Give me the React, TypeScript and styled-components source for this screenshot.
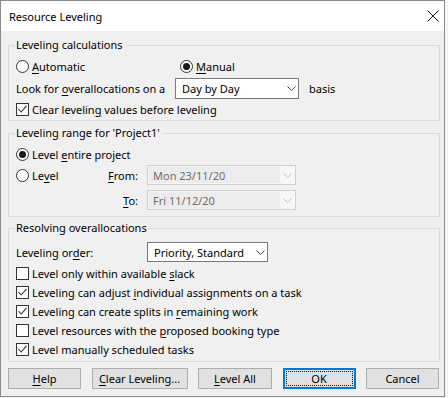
import React from 'react';
import styled, { createGlobalStyle } from 'styled-components';

const GlobalStyle = createGlobalStyle`
  html, body {
    margin: 0;
    padding: 0;
    background: #f4f4f4;
  }
  body {
    font-family: "Noto Sans", "Open Sans", sans-serif;
    font-size: 11px;
    color: #000;
  }
`;

export default function App() {
  return (
    <>
      <GlobalStyle />
      <Window>
        <TitleBar>
          <Title>Resource Leveling</Title>
          <CloseIcon />
        </TitleBar>

        <Content>
          <Group $pb={2}>
            <Legend>Leveling calculations</Legend>
            <Row $h={18} $mt={4}>
              <Cell $w={164}>
                <Radio />
                <Key>A</Key>utomatic
              </Cell>
              <Radio $checked />
              <Key>M</Key>anual
            </Row>
            <Row $h={21} $mt={3}>
              <Cell $w={159}>
                Look for <Key>o</Key>verallocations on a
              </Cell>
              <Select $w={124} $h={21}>
                <Value>Day by Day</Value>
                <Chevron />
              </Select>
              <Suffix>basis</Suffix>
            </Row>
            <Row $h={18} $mt={1}>
              <Check $checked />
              Clear levelin<Key>g</Key> values before leveling
            </Row>
          </Group>

          <Group $pb={6} $mt={4}>
            <Legend>Leveling range for 'Project1'</Legend>
            <Row $h={18} $mt={4}>
              <Radio $checked />
              Level <Key>e</Key>ntire project
            </Row>
            <Row $h={20} $mt={2}>
              <Cell $w={131}>
                <Radio />
                Le<Key>v</Key>el
                <FieldLabel>
                  <Key>F</Key>rom:
                </FieldLabel>
              </Cell>
              <Select $w={149} $h={20} $disabled>
                <Value $disabled>Mon 23/11/20</Value>
                <Chevron $disabled />
              </Select>
            </Row>
            <Row $h={20} $mt={5}>
              <Cell $w={131}>
                <FieldLabel>
                  <Key>T</Key>o:
                </FieldLabel>
              </Cell>
              <Select $w={149} $h={20} $disabled>
                <Value $disabled>Fri 11/12/20</Value>
                <Chevron $disabled />
              </Select>
            </Row>
          </Group>

          <Group $pb={2} $mt={3}>
            <Legend>Resolving overallocations</Legend>
            <Row $h={20} $mt={6}>
              <Cell $w={131}>
                Leveling or<Key>d</Key>er:
              </Cell>
              <Select $w={121} $h={20}>
                <Value>Priority, Standard</Value>
                <Chevron />
              </Select>
            </Row>
            <Row $h={19} $mt={2}>
              <Check />
              Level only within available <Key>s</Key>lack
            </Row>
            <Row $h={19}>
              <Check $checked />
              Leveling can adjust <Key>i</Key>ndividual assignments on a task
            </Row>
            <Row $h={19}>
              <Check $checked />
              Leveling can create splits in <Key>r</Key>emaining work
            </Row>
            <Row $h={19}>
              <Check />
              Level resources with the <Key>p</Key>roposed booking type
            </Row>
            <Row $h={19}>
              <Check $checked />
              Level manually scheduled tasks
            </Row>
          </Group>

          <ButtonRow>
            <Button $w={73}>
              <Key>H</Key>elp
            </Button>
            <Button $w={96}>
              <Key>C</Key>lear Leveling...
            </Button>
            <Button $w={74}>
              <Key>L</Key>evel All
            </Button>
            <Button $w={73} $default>
              OK
            </Button>
            <Button $w={73}>Cancel</Button>
          </ButtonRow>
        </Content>
      </Window>
    </>
  );
}

const Radio = ({ $checked }: { $checked?: boolean }) => (
  <RadioCircle>{$checked && <RadioDot />}</RadioCircle>
);

const Check = ({ $checked }: { $checked?: boolean }) => (
  <CheckBox>
    {$checked && (
      <svg width="11" height="11" viewBox="0 0 11 11">
        <polyline points="1.5,5 4.2,8 9.5,1.8" fill="none" stroke="#333" strokeWidth="1.1" />
      </svg>
    )}
  </CheckBox>
);

const Chevron = ({ $disabled }: { $disabled?: boolean }) => (
  <ChevronWrap>
    <svg width="9" height="5" viewBox="0 0 9 5">
      <polyline
        points="0.5,0.5 4.5,4.5 8.5,0.5"
        fill="none"
        stroke={$disabled ? '#c4c4c4' : '#444'}
        strokeWidth="1"
      />
    </svg>
  </ChevronWrap>
);

const CloseIcon = () => (
  <svg width="12" height="12" viewBox="0 0 12 12">
    <path d="M0.5 0.5 L11.5 11.5 M11.5 0.5 L0.5 11.5" stroke="#111" strokeWidth="1" />
  </svg>
);

const Window = styled.div`
  width: 445px;
  height: 397px;
  box-sizing: border-box;
  border: 1px solid #8a8a8a;
  background: #f0f0f0;
  display: flex;
  flex-direction: column;
`;

const TitleBar = styled.div`
  height: 30px;
  background: #fff;
  display: flex;
  align-items: center;
  justify-content: space-between;
  padding: 0 5px 0 8px;
`;

const Title = styled.span`
  font-size: 11px;
  margin-top: 1px;
`;

const Content = styled.div`
  flex: 1;
  display: flex;
  flex-direction: column;
  padding: 6px 4px 0 7px;
`;

const Group = styled.fieldset<{ $pb: number; $mt?: number }>`
  margin: ${(p) => p.$mt ?? 0}px 0 0 0;
  padding: 0 7px ${(p) => p.$pb}px 7px;
  border: 1px solid #dcdcdc;
  min-width: 0;
`;

const Legend = styled.legend`
  padding: 0 2px 0 1px;
  margin-left: -1px;
  line-height: 16px;
  font-size: 11px;
`;

const Row = styled.div<{ $h: number; $mt?: number }>`
  display: flex;
  align-items: center;
  height: ${(p) => p.$h}px;
  margin-top: ${(p) => p.$mt ?? 0}px;
  white-space: pre;
`;

const Cell = styled.div<{ $w: number }>`
  width: ${(p) => p.$w}px;
  flex: none;
  display: flex;
  align-items: center;
  white-space: pre;
`;

const FieldLabel = styled.span`
  margin-left: auto;
  padding-right: 9px;
`;

const Key = styled.span`
  text-decoration: underline;
  text-underline-offset: 2px;
`;

const RadioCircle = styled.span`
  width: 13px;
  height: 13px;
  box-sizing: border-box;
  border: 1px solid #333;
  border-radius: 50%;
  background: #fff;
  display: inline-flex;
  align-items: center;
  justify-content: center;
  flex: none;
  margin-right: 3px;
`;

const RadioDot = styled.span`
  width: 7px;
  height: 7px;
  border-radius: 50%;
  background: #1a1a1a;
`;

const CheckBox = styled.span`
  width: 13px;
  height: 13px;
  box-sizing: border-box;
  border: 1px solid #333;
  background: #fff;
  display: inline-flex;
  align-items: center;
  justify-content: center;
  flex: none;
  margin-right: 3px;
`;

const Select = styled.div<{ $w: number; $h: number; $disabled?: boolean }>`
  width: ${(p) => p.$w}px;
  height: ${(p) => p.$h}px;
  box-sizing: border-box;
  border: 1px solid ${(p) => (p.$disabled ? '#d0d0d0' : '#7a7a7a')};
  background: ${(p) => (p.$disabled ? '#f7f7f7' : '#fff')};
  display: flex;
  align-items: stretch;
  flex: none;
  padding: ${(p) => (p.$disabled ? '1px' : '0')};
`;

const Value = styled.span<{ $disabled?: boolean }>`
  flex: 1;
  display: flex;
  align-items: center;
  padding-left: ${(p) => (p.$disabled ? '4px' : '6px')};
  color: ${(p) => (p.$disabled ? '#6d6d6d' : '#000')};
  background: ${(p) => (p.$disabled ? '#ececec' : 'transparent')};
`;

const ChevronWrap = styled.span`
  width: 14px;
  display: flex;
  align-items: center;
  justify-content: center;
  flex: none;
`;

const Suffix = styled.span`
  margin-left: 10px;
`;

const ButtonRow = styled.div`
  display: flex;
  justify-content: space-between;
  margin-top: 6px;
  padding-right: 1px;
`;

const Button = styled.button<{ $w: number; $default?: boolean }>`
  position: relative;
  width: ${(p) => p.$w}px;
  height: 21px;
  padding: 0;
  font-family: inherit;
  font-size: 11px;
  color: #000;
  background: #e1e1e1;
  border: 1px solid ${(p) => (p.$default ? '#0078d7' : '#adadad')};
  box-shadow: ${(p) => (p.$default ? 'inset 0 0 0 1px #0078d7' : 'none')};

  &::after {
    content: '';
    display: ${(p) => (p.$default ? 'block' : 'none')};
    position: absolute;
    inset: 2px;
    border: 1px dotted #111;
  }
`;
